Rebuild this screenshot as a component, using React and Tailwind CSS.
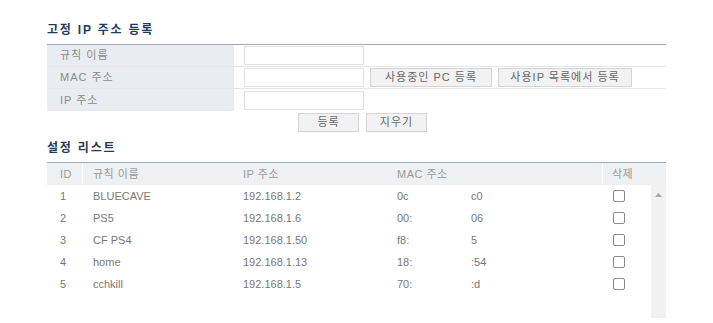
import React from 'react';

const font = { fontFamily: '"Liberation Sans", "Noto Sans CJK KR", sans-serif' };

const rules = [
    { id: 1, name: 'BLUECAVE', ip: '192.168.1.2', macA: '0c', macB: 'c0' },
    { id: 2, name: 'PS5', ip: '192.168.1.6', macA: '00:', macB: '06' },
    { id: 3, name: 'CF PS4', ip: '192.168.1.50', macA: 'f8:', macB: '5' },
    { id: 4, name: 'home', ip: '192.168.1.13', macA: '18:', macB: ':54' },
    { id: 5, name: 'cchkill', ip: '192.168.1.5', macA: '70:', macB: ':d' },
];

const Btn = ({ children, className = '' }) => (
    <button className={`h-[19px] bg-[#f2f2f2] border border-[#d4d4d4] text-[11px] text-[#666] tracking-[1px] leading-none ${className}`}>
        {children}
    </button>
);

const FormRow = ({ label, children, last }) => (
    <div className={`flex h-[22px] ${last ? '' : 'border-b border-[#e3e7eb]'}`}>
        <div className="w-[187px] bg-[#e9edf1] pl-[13px] flex items-center text-[11px] text-[#8a8a8a] tracking-[1px]">{label}</div>
        <div className="flex-1 flex items-center gap-[6px] pl-[10px]">
            <input className="w-[120px] h-[19px] border border-[#e2e2e2] bg-white outline-none" />
            {children}
        </div>
    </div>
);

export default function App() {
    return (
        <div className="w-[713px] h-[323px] bg-white overflow-hidden" style={font}>
            <div className="ml-[47px] w-[619px] pt-[23px]">
                <h2 className="text-[12px] font-bold text-[#1f3a5c] tracking-[1.8px] leading-[14px] mb-[7px]">고정 IP 주소 등록</h2>

                <div className="border-t border-[#9eacba]">
                    <FormRow label="규칙 이름" />
                    <FormRow label="MAC 주소">
                        <Btn className="w-[122px]">사용중인 PC 등록</Btn>
                        <Btn className="w-[134px]">사용IP 목록에서 등록</Btn>
                    </FormRow>
                    <FormRow label="IP 주소" last />
                </div>

                <div className="flex justify-center gap-[7px] mt-[2px] pl-[12px]">
                    <Btn className="w-[61px]">등록</Btn>
                    <Btn className="w-[61px]">지우기</Btn>
                </div>

                <h2 className="text-[12px] font-bold text-[#1f3a5c] tracking-[1.8px] leading-[14px] mt-[9px] mb-[7px]">설정 리스트</h2>

                <div className="border-t border-[#9eacba]">
                    <div className="grid grid-cols-[36px_150px_154px_216px_48px_15px] h-[22px] bg-[#eef1f4] text-[11px] text-[#999] tracking-[0.5px] items-center">
                        <div className="pl-[13px] h-full flex items-center border-r border-white">ID</div>
                        <div className="pl-[10px]">규칙 이름</div>
                        <div className="pl-[10px]">IP 주소</div>
                        <div className="pl-[10px] h-full flex items-center border-r border-white">MAC 주소</div>
                        <div className="pl-[9px]">삭제</div>
                        <div />
                    </div>

                    <div className="flex h-[133px]">
                        <div className="w-[604px]">
                            {rules.map((r) => (
                                <div key={r.id} className="grid grid-cols-[36px_150px_154px_216px_48px] h-[22px] items-center text-[11px] text-[#777]">
                                    <div className="pl-[13px]">{r.id}</div>
                                    <div className="pl-[10px]">{r.name}</div>
                                    <div className="pl-[10px]">{r.ip}</div>
                                    <div className="pl-[10px] flex">
                                        <span className="w-[74px]">{r.macA}</span>
                                        <span>{r.macB}</span>
                                    </div>
                                    <div className="pl-[10px] flex items-center">
                                        <span className="w-[12px] h-[12px] border border-[#8a8a8a] rounded-[2px] bg-white" />
                                    </div>
                                </div>
                            ))}
                        </div>
                        <div className="w-[15px] bg-[#f1f1f1] flex justify-center pt-[8px]">
                            <svg width="7" height="4" viewBox="0 0 7 4">
                                <path d="M0 4 L3.5 0 L7 4 Z" fill="#a8a8a8" />
                            </svg>
                        </div>
                    </div>
                </div>
            </div>
        </div>
    );
}
